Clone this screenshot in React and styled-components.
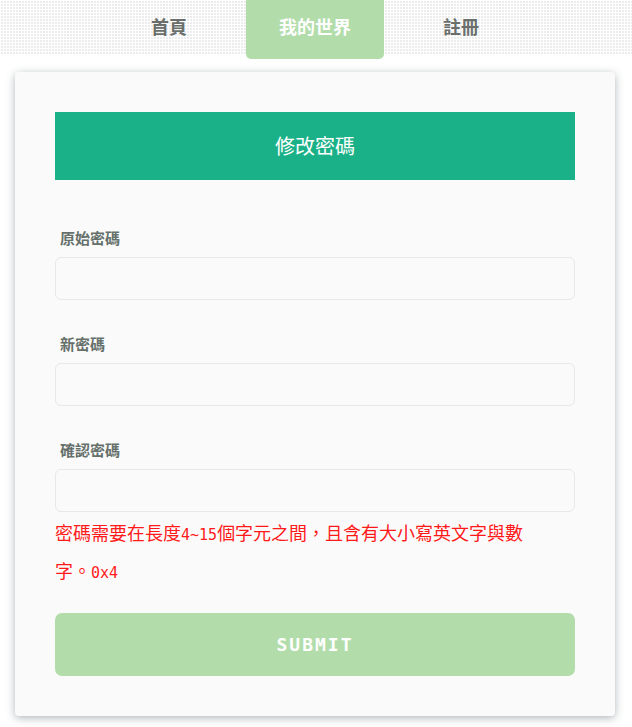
import React from 'react'
import styled, { createGlobalStyle } from 'styled-components'

const GlobalStyle = createGlobalStyle`
  body {
    margin: 0;
    background: #ffffff;
    font-family: "Noto Sans CJK TC", "Noto Sans", sans-serif;
  }
`

const NavBar = styled.nav`
  height: 55px;
  background-color: #ececec;
  background-image:
    linear-gradient(90deg, #ffffff 1px, transparent 1px),
    linear-gradient(#ffffff 1px, transparent 1px);
  background-size: 3px 3px;
`

const NavList = styled.ul`
  list-style: none;
  margin: 0;
  padding: 0 2px 0 0;
  display: flex;
  justify-content: center;
  gap: 8px;
`

const NavItem = styled.li`
  width: 138px;
  height: 59px;
  display: flex;
  align-items: center;
  justify-content: center;
  padding-bottom: 8px;
  box-sizing: border-box;
  font-size: 18px;
  font-weight: 700;
  color: ${p => (p.$active ? '#ffffff' : '#6a6f6c')};
  background: ${p => (p.$active ? '#b2ddab' : 'transparent')};
  border-radius: 0 0 5px 5px;
`

const Page = styled.main`
  padding: 17px 17px 11px 15px;
`

const Card = styled.section`
  background: #fafafa;
  border-radius: 4px;
  padding: 40px;
  box-shadow: 0 2px 8px rgba(80, 90, 100, 0.45);
`

const Title = styled.h2`
  margin: 0;
  height: 68px;
  display: flex;
  align-items: center;
  justify-content: center;
  padding-bottom: 2px;
  box-sizing: border-box;
  background: #1bb188;
  color: #ffffff;
  font-size: 20px;
  font-weight: 400;
`

const Form = styled.form`
  display: flex;
  flex-direction: column;
  padding-top: 48px;
`

const Field = styled.div`
  display: flex;
  flex-direction: column;
  margin-bottom: ${p => (p.$last ? '0' : '34px')};
`

const Label = styled.label`
  font-size: 15px;
  line-height: 20px;
  font-weight: 700;
  color: #66706b;
  padding-left: 5px;
  margin-bottom: 9px;
`

const Input = styled.input`
  height: 43px;
  box-sizing: border-box;
  border: 1px solid #e8e8e8;
  border-radius: 6px;
  background: #fafafa;
  outline: none;
`

const ErrorText = styled.p`
  margin: 1px 0 0 0;
  max-width: 495px;
  color: #ff1a1a;
  font-size: 18px;
  line-height: 38px;
  font-family: "Noto Sans CJK TC", monospace;
`

const Mono = styled.span`
  font-family: "DejaVu Sans Mono", monospace;
  font-size: 15px;
  line-height: 1;
`

const SubmitButton = styled.button`
  margin-top: 24px;
  height: 63px;
  border: none;
  border-radius: 7px;
  background: #b2ddab;
  color: #ffffff;
  font-family: "DejaVu Sans Mono", monospace;
  font-size: 18px;
  font-weight: 700;
  letter-spacing: 2px;
`

const fields = ['原始密碼', '新密碼', '確認密碼']

export default function App() {
  return (
    <>
      <GlobalStyle />
      <NavBar>
        <NavList>
          <NavItem>首頁</NavItem>
          <NavItem $active>我的世界</NavItem>
          <NavItem>註冊</NavItem>
        </NavList>
      </NavBar>
      <Page>
        <Card>
          <Title>修改密碼</Title>
          <Form onSubmit={e => e.preventDefault()}>
            {fields.map((f, i) => (
              <Field key={f} $last={i === fields.length - 1}>
                <Label>{f}</Label>
                <Input type="password" />
              </Field>
            ))}
            <ErrorText>
              密碼需要在長度<Mono>4~15</Mono>個字元之間，且含有大小寫英文字與數字。<Mono>0x4</Mono>
            </ErrorText>
            <SubmitButton type="submit">SUBMIT</SubmitButton>
          </Form>
        </Card>
      </Page>
    </>
  )
}
